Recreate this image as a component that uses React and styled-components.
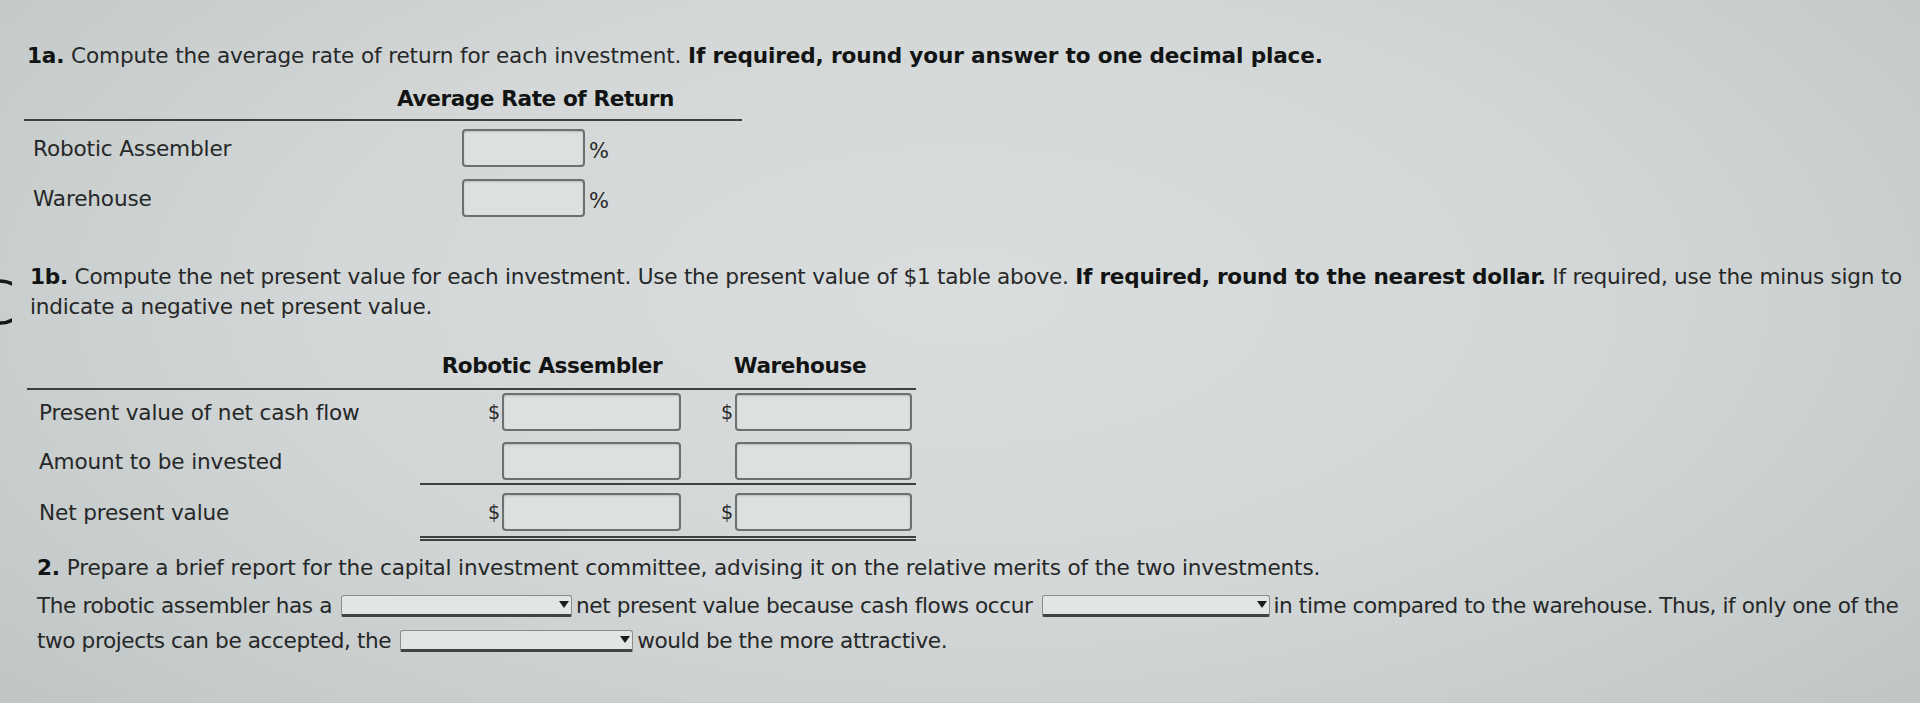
import styled, { createGlobalStyle } from 'styled-components'

const GlobalStyle = createGlobalStyle`
    html, body {
        margin: 0;
        padding: 0;
    }
    body {
        width: 1920px;
        height: 703px;
        overflow: hidden;
        font-family: "DejaVu Sans", Verdana, sans-serif;
        color: #262828;
        background:
            radial-gradient(ellipse 72% 95% at 50% 42%, #dadddd 0%, #d3d7d7 45%, #c5caca 80%, #bcc2c1 100%);
    }
`

const Page = styled.main`
    position: relative;
    padding: 41px 0 0 27px;
    font-size: 21.6px;
    letter-spacing: -0.15px;
    white-space: nowrap;
`

const Prompt = styled.p`
    margin: 0;
    line-height: 30px;
    letter-spacing: ${p => p.$tight ? '-0.25px' : 'inherit'};
    & b {
        color: #121414;
    }
`

const Edge = styled.svg`
    position: absolute;
    left: 0;
    top: 279px;
`

/* 1a table */

const RateTable = styled.div`
    width: 718px;
    margin: 14px 0 0 -3px;
`

const RateHead = styled.div`
    display: grid;
    grid-template-columns: 371px 281px;
    border-bottom: 2px solid #3d4040;
    padding-bottom: 6px;
    font-weight: bold;
    color: #121414;
    line-height: 28px;
    letter-spacing: -0.4px;
    & > span:last-child {
        text-align: center;
    }
`

const RateRow = styled.div`
    display: grid;
    grid-template-columns: 438px 123px auto;
    align-items: center;
    margin-top: ${p => p.$first ? '8px' : '12px'};
    & > span:first-child {
        padding-left: 9px;
    }
`

const Unit = styled.span`
    padding: 6px 0 0 4px;
    font-size: 21px;
`

const Field = styled.div`
    box-sizing: border-box;
    width: ${p => p.$w || 123}px;
    height: 38px;
    border: 2px solid #6c7070;
    border-radius: 4px;
    background: #dde0e0;
    box-shadow: inset 0 1px 2px rgba(0,0,0,0.15);
`

/* 1b table */

const NpvTable = styled.div`
    display: grid;
    grid-template-columns: 393px 264px 232px;
    margin-top: 30px;
`

const NpvHead = styled.div`
    font-weight: bold;
    color: #121414;
    text-align: center;
    line-height: 28px;
    letter-spacing: -0.4px;
    padding-bottom: 8px;
    border-bottom: 2px solid #3d4040;
`

const Label = styled.div`
    display: flex;
    align-items: center;
    padding-left: 12px;
    margin-top: ${p => p.$top}px;
    height: 38px;
    padding-bottom: ${p => p.$rule === 'double' ? 10 : p.$rule === 'single' ? 5 : 0}px;
`

const Cell = styled.div`
    display: flex;
    align-items: center;
    justify-content: flex-end;
    padding-right: ${p => p.$pr}px;
    margin-top: ${p => p.$top}px;
    padding-bottom: ${p => p.$rule === 'double' ? 5 : p.$rule === 'single' ? 3 : 0}px;
    border-bottom: ${p => p.$rule === 'double' ? '5px double #3d4040' : p.$rule === 'single' ? '2px solid #3d4040' : 'none'};
`

const Dollar = styled.span`
    font-size: 19px;
    margin-right: 2px;
`

/* part 2 */

const Report = styled.div`
    margin-top: 12px;
    padding-left: 10px;
`

const Sentence = styled.p`
    margin: 5px 0 0;
    line-height: 35px;
    letter-spacing: -0.4px;
`

const Select = styled.span`
    display: inline-block;
    position: relative;
    box-sizing: border-box;
    width: ${p => p.$w}px;
    height: 22px;
    vertical-align: -4px;
    margin: 0 4px 0 9px;
    border: 1px solid #8a8e8e;
    border-bottom: 3px solid #3f4343;
    border-radius: 3px 3px 2px 2px;
    background: #e2e5e5;
    &::after {
        content: '';
        position: absolute;
        right: 2px;
        top: 5px;
        border-left: 5px solid transparent;
        border-right: 5px solid transparent;
        border-top: 7px solid #1c1e1e;
    }
`

function App() {
    return (
        <>
            <GlobalStyle />
            <Page>
                <Edge width="12" height="46" viewBox="0 0 12 46">
                    <path d="M0 2 A 24 21 0 0 1 0 44" fill="none" stroke="#161818" strokeWidth="3.5" />
                </Edge>

                <Prompt>
                    <b>1a.</b> Compute the average rate of return for each investment. <b>If required, round your answer to one decimal place.</b>
                </Prompt>

                <RateTable>
                    <RateHead>
                        <span></span>
                        <span>Average Rate of Return</span>
                    </RateHead>
                    <RateRow $first>
                        <span>Robotic Assembler</span>
                        <Field />
                        <Unit>%</Unit>
                    </RateRow>
                    <RateRow>
                        <span>Warehouse</span>
                        <Field />
                        <Unit>%</Unit>
                    </RateRow>
                </RateTable>

                <Prompt $tight style={{ marginTop: 45, paddingLeft: 3 }}>
                    <b>1b.</b> Compute the net present value for each investment. Use the present value of $1 table above. <b>If required, round to the nearest dollar.</b> If required, use the minus sign to
                    <br />
                    indicate a negative net present value.
                </Prompt>

                <NpvTable>
                    <NpvHead></NpvHead>
                    <NpvHead>Robotic Assembler</NpvHead>
                    <NpvHead>Warehouse</NpvHead>

                    <Label $top={3}>Present value of net cash flow</Label>
                    <Cell $top={3} $pr={3}><Dollar>$</Dollar><Field $w={179} /></Cell>
                    <Cell $top={3} $pr={4}><Dollar>$</Dollar><Field $w={177} /></Cell>

                    <Label $top={11}>Amount to be invested</Label>
                    <Cell $top={11} $pr={3} $rule="single"><Field $w={179} /></Cell>
                    <Cell $top={11} $pr={4} $rule="single"><Field $w={177} /></Cell>

                    <Label $top={8}>Net present value</Label>
                    <Cell $top={8} $pr={3} $rule="double"><Dollar>$</Dollar><Field $w={179} /></Cell>
                    <Cell $top={8} $pr={4} $rule="double"><Dollar>$</Dollar><Field $w={177} /></Cell>
                </NpvTable>

                <Report>
                    <Prompt>
                        <b>2.</b> Prepare a brief report for the capital investment committee, advising it on the relative merits of the two investments.
                    </Prompt>
                    <Sentence>
                        The robotic assembler has a<Select $w={231} />net present value because cash flows occur<Select $w={228} />in time compared to the warehouse. Thus, if only one of the
                        <br />
                        two projects can be accepted, the<Select $w={233} />would be the more attractive.
                    </Sentence>
                </Report>
            </Page>
        </>
    )
}

export default App
